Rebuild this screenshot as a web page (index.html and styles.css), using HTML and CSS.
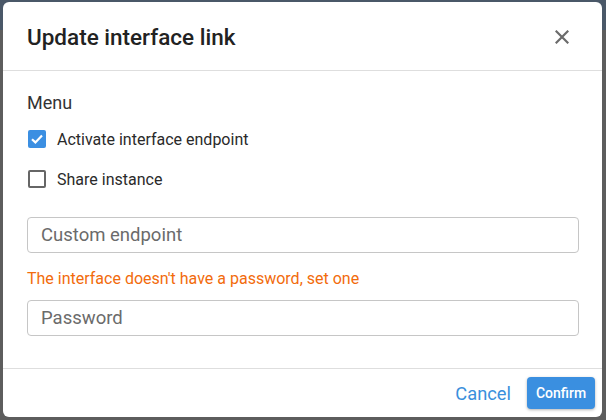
FILE: index.html
```html
<!DOCTYPE html>
<html>
<head>
<meta charset="utf-8">
<link rel="stylesheet" href="styles.css">
</head>
<body>
<div class="backdrop">
  <div class="bg-band"></div>
  <div class="modal">
    <div class="modal-header">
      <h2 class="title">Update interface link</h2>
      <button class="close" aria-label="Close">
        <svg width="14" height="14" viewBox="0 0 14 14"><path d="M1.5 1.5 L12.5 12.5 M12.5 1.5 L1.5 12.5" stroke="#6b6b6b" stroke-width="2.2" stroke-linecap="square"/></svg>
      </button>
    </div>
    <div class="modal-body">
      <div class="section-label">Menu</div>
      <label class="check-row">
        <span class="box checked">
          <svg width="18" height="18" viewBox="0 0 18 18"><path d="M4 9.2 L7.4 12.4 L14 5.6" fill="none" stroke="#fff" stroke-width="2.2"/></svg>
        </span>
        <span class="check-text">Activate interface endpoint</span>
      </label>
      <label class="check-row">
        <span class="box"></span>
        <span class="check-text">Share instance</span>
      </label>
      <input class="field first" type="text" placeholder="Custom endpoint">
      <div class="warning">The interface doesn't have a password, set one</div>
      <input class="field" type="text" placeholder="Password">
    </div>
    <div class="modal-footer">
      <button class="btn-cancel">Cancel</button>
      <button class="btn-confirm">Confirm</button>
    </div>
  </div>
</div>
</body>
</html>
```
FILE: styles.css
```css
html, body {
  margin: 0;
  padding: 0;
}
body {
  font-family: Roboto, "Liberation Sans", sans-serif;
  width: 606px;
  height: 420px;
  overflow: hidden;
}
.backdrop {
  position: relative;
  width: 606px;
  height: 420px;
  background: #5d5d5d;
  padding-top: 2px;
  box-sizing: border-box;
}
.bg-band {
  position: absolute;
  left: 0;
  top: 0;
  width: 606px;
  height: 30px;
  background: #4a5868;
}
.modal {
  position: relative;
  margin-left: 3px;
  width: 599px;
  height: 415px;
  background: #fff;
  border-radius: 6px;
  display: flex;
  flex-direction: column;
}
.modal-header {
  height: 68px;
  border-bottom: 1px solid #dedede;
  display: flex;
  align-items: center;
  justify-content: space-between;
  padding: 0 33px 0 24px;
}
.title {
  margin: 0;
  font-size: 22.5px;
  font-weight: 500;
  color: #222;
  padding-top: 2px;
}
.close {
  border: 0;
  background: none;
  padding: 0;
  width: 14px;
  height: 14px;
  display: flex;
  margin-top: 2px;
}
.modal-body {
  flex: 1;
  padding: 22px 24px 0 24px;
  display: flex;
  flex-direction: column;
}
.section-label {
  font-size: 18px;
  color: #333;
  line-height: 20px;
}
.check-row {
  display: flex;
  align-items: center;
  gap: 11px;
  margin-top: 16px;
  height: 20px;
  padding-left: 1px;
}
.check-row + .check-row {
  margin-top: 20px;
}
.box {
  width: 18px;
  height: 18px;
  box-sizing: border-box;
  border: 2px solid #666;
  border-radius: 2px;
  display: flex;
}
.box.checked {
  background: #3b8fe2;
  border: 0;
}
.check-text {
  font-size: 16px;
  color: #2a2a2a;
}
.field {
  display: block;
  width: 552px;
  height: 36px;
  box-sizing: border-box;
  border: 1px solid #c6c6c6;
  border-radius: 4px;
  padding: 0 13px;
  font-family: Roboto, "Liberation Sans", sans-serif;
  font-size: 18.5px;
  outline: none;
}
.field::placeholder {
  color: #6b6b6b;
}
.field.first {
  margin-top: 28px;
}
.warning {
  color: #f26b0c;
  font-size: 16px;
  line-height: 20px;
  margin-top: 16px;
  margin-bottom: 11px;
}
.modal-footer {
  height: 48px;
  border-top: 1px solid #dedede;
  display: flex;
  align-items: center;
  justify-content: flex-end;
  padding: 0 7px 0 0;
  gap: 16px;
}
.btn-cancel {
  border: 0;
  background: none;
  color: #3a8fdc;
  font-family: Roboto, "Liberation Sans", sans-serif;
  font-size: 18.3px;
  padding: 0;
}
.btn-confirm {
  border: 0;
  background: #3a8fe0;
  color: #fff;
  font-family: Roboto, "Liberation Sans", sans-serif;
  font-size: 14px;
  font-weight: 500;
  height: 32px;
  width: 68px;
  border-radius: 4px;
  box-shadow: 0 1px 3px rgba(0,0,0,0.3);
  padding: 0;
}
```
